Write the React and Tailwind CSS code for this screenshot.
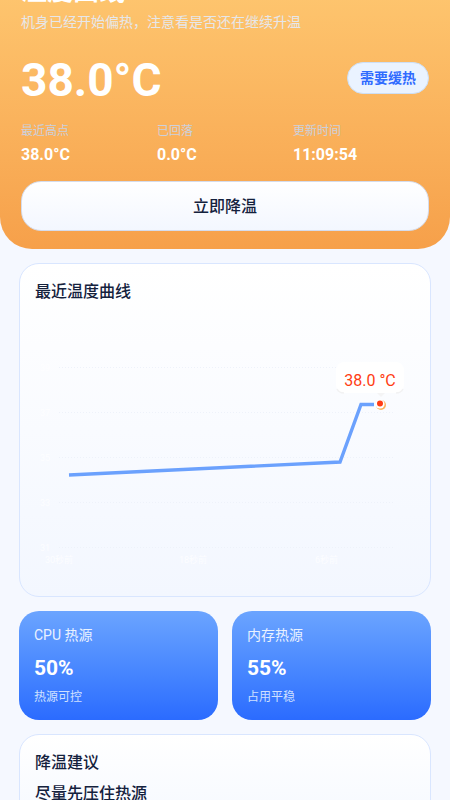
import React from "react";

const stats = [
  { label: "最近高点", value: "38.0°C" },
  { label: "已回落", value: "0.0°C" },
  { label: "更新时间", value: "11:09:54" },
];

const sources = [
  { title: "CPU 热源", value: "50%", note: "热源可控" },
  { title: "内存热源", value: "55%", note: "占用平稳" },
];

const gridLines = [
  { y: 58.5, label: "39" },
  { y: 103.5, label: "37" },
  { y: 148.5, label: "35" },
  { y: 193.5, label: "33" },
  { y: 238.5, label: "31" },
];

const timeLabels = [
  { x: 10, text: "30秒前" },
  { x: 144, text: "18秒前" },
  { x: 280, text: "6秒前" },
];

const TemperatureChart = () => (
  <svg viewBox="0 -5 380 280" className="block w-full" role="img" aria-label="最近温度曲线">
    {gridLines.map((line) => (
      <g key={line.y}>
        <line
          x1="24"
          x2="358"
          y1={line.y}
          y2={line.y}
          stroke="#eef2fa"
          strokeWidth="1"
          strokeDasharray="1 2"
        />
        <text x="5" y={line.y + 3} fontSize="9" fill="#ffffff" fillOpacity="0.8">
          {line.label}
        </text>
      </g>
    ))}
    {timeLabels.map((label) => (
      <text key={label.text} x={label.x} y="254" fontSize="9" fill="#ffffff" fillOpacity="0.8">
        {label.text}
      </text>
    ))}
    <polyline
      points="34,166 305,153 326,95.5 339,95.5"
      fill="none"
      stroke="#6ba1fd"
      strokeWidth="3.4"
    />
    {/* Tooltip */}
    <rect x="301" y="53" width="68" height="31" rx="8" fill="#ffffff" />
    <path d="M302 80 q2 4 7 4 M368 80 q-2 4 -7 4" fill="none" stroke="#f2f2f3" strokeWidth="1.5" />
    <path d="M342 84 h8 l-4 4 z" fill="#f4f4f5" />
    <text x="335" y="77" textAnchor="middle" fontSize="16" fill="#ff3d14">
      38.0 °C
    </text>
    <circle cx="346" cy="96" r="5" fill="#fbb45e" />
    <circle cx="345" cy="95" r="4.6" fill="#ffffff" />
    <circle cx="345" cy="94.5" r="3" fill="#ff3d14" />
  </svg>
);

const App = () => {
  return (
    <div className="h-screen overflow-hidden bg-[#f5f8ff] font-['Roboto','Noto_Sans_CJK_SC',sans-serif] text-[#14213d]">
      {/* Header */}
      <header className="-mt-7 rounded-b-[32px] bg-linear-to-b from-[#fec871] to-[#f6a04a] px-[21px] pb-[18px]">
        <h1 className="text-[26px] leading-[38px] font-bold text-white">温度曲线</h1>
        <p className="text-sm leading-6 text-[#e6e7ea]">
          机身已经开始偏热，注意看是否还在继续升温
        </p>
        <div className="mt-[18px] flex items-start justify-between">
          <div className="text-[46px] leading-[56px] font-bold text-white">38.0°C</div>
          <span className="mt-2.5 rounded-full border border-[#cddff5] bg-[#eaf3ff] px-3 text-sm leading-[30px] font-bold text-[#2f6bff]">
            需要缓热
          </span>
        </div>
        <dl className="mt-[13px] grid grid-cols-3">
          {stats.map((stat) => (
            <div key={stat.label}>
              <dt className="text-xs leading-5 text-[#cbd0dd]">{stat.label}</dt>
              <dd className="mt-0.5 text-base leading-6 font-bold text-white">{stat.value}</dd>
            </div>
          ))}
        </dl>
        <button
          type="button"
          className="mt-[14px] w-full rounded-[20px] border border-[#d5dcec] bg-linear-to-b from-white to-[#f3f7ff] pt-[13px] pb-[11px] text-base leading-6 font-medium"
        >
          立即降温
        </button>
      </header>

      <main className="space-y-[14px] px-[19px] pt-[14px]">
        {/* Chart */}
        <section className="rounded-[20px] border border-[#d9e6ff] bg-linear-to-b from-white to-[#f3f7ff] px-[15px] pt-4 pb-3">
          <h2 className="text-base leading-6 font-medium">最近温度曲线</h2>
          <TemperatureChart />
        </section>

        {/* Heat sources */}
        <div className="grid grid-cols-2 gap-[14px]">
          {sources.map((source) => (
            <section
              key={source.title}
              className="rounded-[20px] bg-linear-to-b from-[#6ba4ff] to-[#2b6bff] px-[15px] pt-[14px] pb-[13px] text-white"
            >
              <h3 className="text-sm leading-5 text-[#eaf2ff]">{source.title}</h3>
              <p className="mt-2 text-[21px] leading-[30px] font-bold">{source.value}</p>
              <p className="mt-1 text-xs leading-5 text-[#cfe0ff]">{source.note}</p>
            </section>
          ))}
        </div>

        {/* Advice */}
        <section className="rounded-[20px] border border-[#d9e6ff] bg-linear-to-b from-white to-[#f3f7ff] px-[15px] pt-4 pb-10">
          <h2 className="text-base leading-6 font-medium">降温建议</h2>
          <p className="mt-[7px] text-base leading-6 font-medium">尽量先压住热源</p>
        </section>
      </main>
    </div>
  );
};

export default App;
